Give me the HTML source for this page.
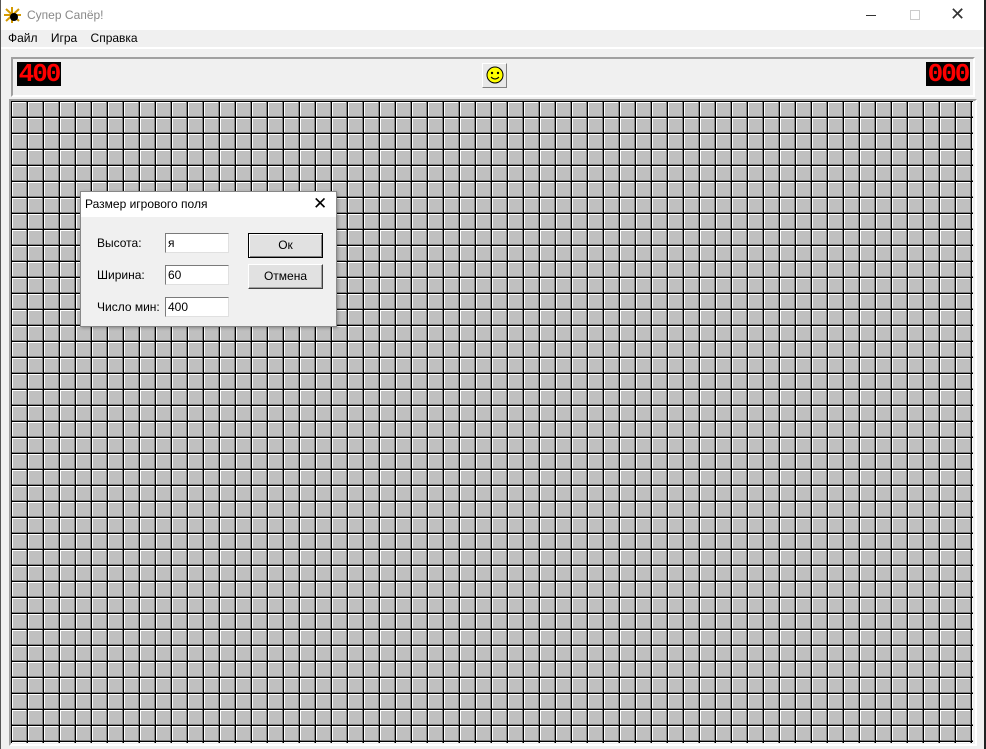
<!DOCTYPE html>
<html><head><meta charset="utf-8"><style>
*{margin:0;padding:0;box-sizing:border-box}
body{width:986px;height:749px;background:#f0f0f0;font-family:"Liberation Sans",sans-serif;position:relative;overflow:hidden}
.a{position:absolute}
.lcd{background:#000;color:#f00;font-family:"Liberation Mono",monospace;font-size:26px;line-height:24px;letter-spacing:-2px;text-align:center;font-weight:bold;overflow:hidden}
.t{font-size:12px;color:#000}
.inp{background:#fff;border:1px solid #7a7a7a;border-right-color:#e0e0e0;border-bottom-color:#e0e0e0;font-size:12px;padding:2px 2px;line-height:14px}
.btn{background:#e1e1e1;border:1px solid #fff;border-right-color:#404040;border-bottom-color:#404040;box-shadow:inset -1px -1px 0 #a0a0a0;font-size:12px;text-align:center}
</style></head><body>
<div class="a" style="left:0;top:0;width:986px;height:30px;background:#fff"></div>
<div class="a" style="left:984px;top:0;width:2px;height:749px;background:#222"></div>
<div class="a" style="left:0;top:0;width:1px;height:749px;background:#555"></div>
<svg class="a" style="left:4px;top:7px" width="18" height="16" viewBox="0 0 18 16"><g stroke="#d49a00" stroke-width="2"><line x1="2" y1="2" x2="15" y2="14"/><line x1="15" y1="2" x2="2" y2="14"/><line x1="8" y1="0" x2="8" y2="16"/><line x1="0" y1="8" x2="17" y2="8"/></g><circle cx="10" cy="10" r="4" fill="#000"/></svg>
<div class="a t" style="left:27px;top:8px;color:#888;font-size:12px">Супер Сапёр!</div>
<div class="a" style="left:866px;top:15px;width:10px;height:1px;background:#333"></div>
<div class="a" style="left:910px;top:10px;width:10px;height:10px;border:1px solid #ccc"></div>
<div class="a" style="left:950px;top:5px;font-size:18px;color:#333;line-height:18px">✕</div>
<div class="a t" style="left:8px;top:31px;font-size:12px;line-height:14px">Файл &nbsp;&nbsp;&nbsp;Игра &nbsp;&nbsp;&nbsp;Справка</div>
<div class="a" style="left:1px;top:47px;width:983px;height:2px;background:#fff"></div>
<div class="a" style="left:11px;top:57px;width:964px;height:40px;border:2px solid #a0a0a0;border-right-color:#fff;border-bottom-color:#fff"></div>
<div class="a lcd" style="left:17px;top:62px;width:44px;height:24px">400</div>
<div class="a lcd" style="left:926px;top:62px;width:44px;height:24px">000</div>
<div class="a" style="left:482px;top:63px;width:25px;height:25px;background:#e8e8e8;border:1px solid #fff;border-right-color:#808080;border-bottom-color:#808080"></div>
<svg class="a" style="left:485px;top:65px" width="20" height="20"><circle cx="10" cy="10" r="8" fill="#ff0" stroke="#000"/><circle cx="7" cy="8" r="1.2"/><circle cx="13" cy="8" r="1.2"/><path d="M6 12q4 4 8 0" fill="none" stroke="#000"/></svg>
<div class="a" style="left:9px;top:99px;width:968px;height:647px;border:2px solid #a0a0a0;border-right-color:#fff;border-bottom-color:#fff"></div>
<svg class="a" style="left:11px;top:101px" width="962" height="642"><defs><pattern id="p" width="16" height="16" patternUnits="userSpaceOnUse"><rect width="16" height="16" fill="#000"/><rect x="1" y="1" width="15" height="15" fill="#808080"/><rect x="1" y="1" width="14" height="14" fill="#fff"/><rect x="2" y="2" width="13" height="13" fill="#c0c0c0"/></pattern></defs><rect width="962" height="642" fill="url(#p)"/></svg>
<div class="a" style="left:80px;top:191px;width:257px;height:136px;background:#f0f0f0;border:1px solid #888;box-shadow:1px 1px 3px rgba(0,0,0,.3)"></div>
<div class="a" style="left:81px;top:192px;width:255px;height:25px;background:#fff"></div>
<div class="a t" style="left:85px;top:197px">Размер игрового поля</div>
<div class="a" style="left:313px;top:194px;font-size:17px;line-height:20px">✕</div>
<div class="a t" style="left:97px;top:236px">Высота:</div>
<div class="a t" style="left:97px;top:268px">Ширина:</div>
<div class="a t" style="left:97px;top:300px">Число мин:</div>
<div class="a inp" style="left:165px;top:233px;width:64px;height:20px">я</div>
<div class="a inp" style="left:165px;top:265px;width:64px;height:20px">60</div>
<div class="a inp" style="left:165px;top:297px;width:64px;height:20px">400</div>
<div class="a btn" style="left:248px;top:233px;width:75px;height:25px;line-height:22px;border:1px solid #000;box-shadow:inset 1px 1px 0 #fff,inset -1px -1px 0 #808080">Ок</div>
<div class="a btn" style="left:248px;top:264px;width:75px;height:25px;line-height:23px">Отмена</div>
</body></html>
